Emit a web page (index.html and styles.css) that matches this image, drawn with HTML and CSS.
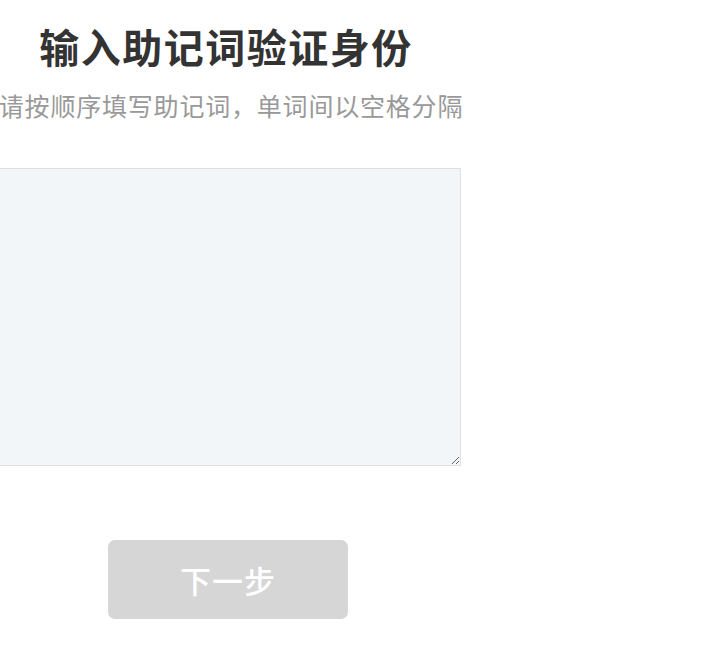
FILE: index.html
```html
<!DOCTYPE html>
<html lang="zh-CN">
<head>
<meta charset="utf-8">
<title>输入助记词验证身份</title>
<link rel="stylesheet" href="styles.css">
</head>
<body>
<main class="page">
  <h1 class="title">输入助记词验证身份</h1>
  <p class="subtitle">请按顺序填写助记词，单词间以空格分隔</p>
  <textarea class="mnemonic"></textarea>
  <button class="next" type="button" disabled>下一步</button>
</main>
</body>
</html>
```

FILE: styles.css
```css
html, body {
  margin: 0;
  padding: 0;
  background: #ffffff;
  overflow: hidden;
}
body {
  font-family: "Noto Sans CJK SC", "Noto Sans", sans-serif;
}
.page {
  width: 470px;
  margin-left: -9px;
  display: flex;
  flex-direction: column;
  align-items: center;
  padding-top: 21px;
}
.title {
  margin: 0;
  font-size: 40px;
  line-height: 50px;
  font-weight: 700;
  color: #333333;
  letter-spacing: 1.5px;
  white-space: nowrap;
}
.subtitle {
  margin: 18px 0 0 10px;
  font-size: 25px;
  line-height: 32px;
  color: #999999;
  letter-spacing: 0.8px;
  white-space: nowrap;
}
.mnemonic {
  box-sizing: border-box;
  margin-top: 47px;
  width: 470px;
  height: 298px;
  border: 1px solid #dedfe0;
  background: #f3f6f9;
  border-radius: 0;
  padding: 10px;
  font-family: inherit;
  font-size: 22px;
  display: block;
  outline: none;
}
.next {
  margin: 74px 0 0 4px;
  width: 240px;
  height: 79px;
  border: none;
  border-radius: 7px;
  background: #d6d6d6;
  color: #ffffff;
  font-family: inherit;
  font-size: 31px;
  font-weight: 500;
  letter-spacing: 1px;
  padding: 0;
}
```
